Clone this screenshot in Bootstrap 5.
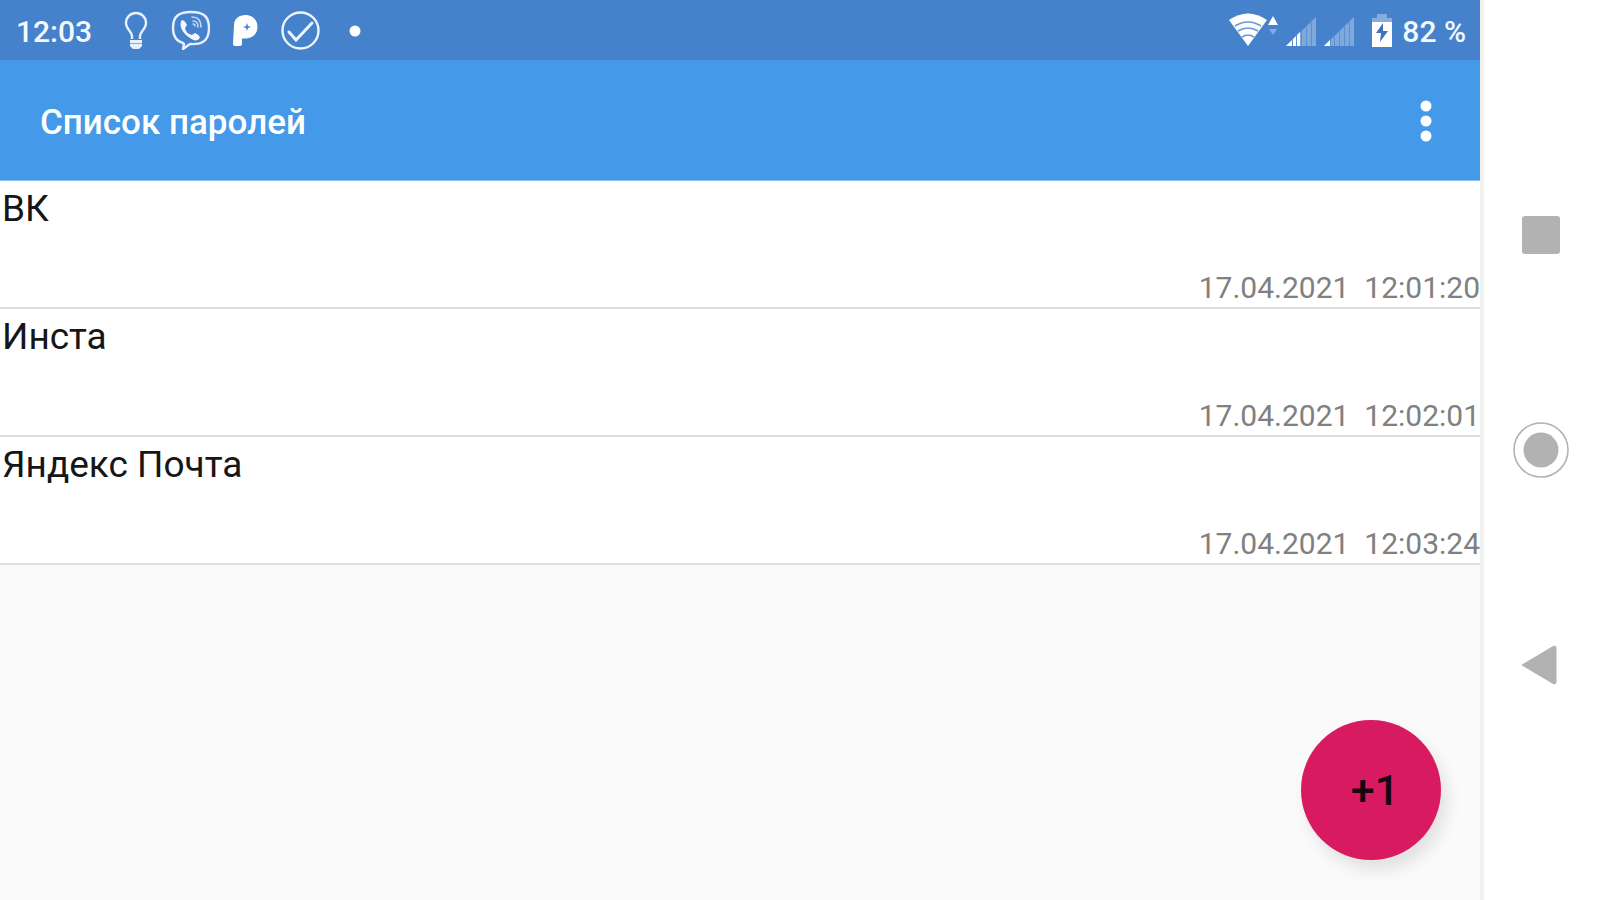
<!DOCTYPE html>
<html lang="ru">
<head>
<meta charset="utf-8">
<meta name="viewport" content="width=device-width, initial-scale=1">
<title>Список паролей</title>
<link href="https://cdn.jsdelivr.net/npm/bootstrap@5.3.0/dist/css/bootstrap.min.css" rel="stylesheet">
<style>
  body { font-family: Roboto, "Noto Sans", sans-serif; background: #fff; }
  svg { display: block; flex: none; }
  .screen { background: #fafafa; }
  .status { height: 60px; background: #4682cb; font-size: 30px; line-height: 40px; font-weight: 500; color: #f3f8ff; padding: 0 14px 0 16px; }
  .status span { padding-top: 3px; }
  .status-icons { gap: 20px; margin-left: 30px; }
  .app-head { height: 121px; background: #4599e9; padding: 0 38px 0 40px; border-bottom: 1px solid #8bbcec; }
  .app-title { font-size: 35px; line-height: 44px; font-weight: 500; color: #fff; padding-top: 5px; }
  .entry { height: 128px; border-bottom: 2px solid #dedede; background: #fff; }
  .entry-name { font-size: 37px; line-height: 44px; color: #161616; padding: 6px 0 0 2px; }
  .entry-date { font-size: 30px; line-height: 36px; color: #808080; white-space: pre; padding-bottom: 1px; }
  .fab { right: 39px; bottom: 40px; width: 140px; height: 140px; background: #d81b60; color: #180510; font-size: 43px; line-height: 52px; font-weight: 500; padding: 0 0 0 8px; box-shadow: 6px 10px 16px rgba(0,0,0,.1); }
  .side-nav { width: 120px; border-left: 4px solid #f0f0f0; padding-right: 3px; }
  .side-nav button { height: 215px; }
</style>
</head>
<body>
<div class="d-flex min-vh-100">
  <main class="screen position-relative flex-grow-1 d-flex flex-column">
    <div class="status d-flex align-items-center">
      <span>12:03</span>
      <div class="status-icons d-flex align-items-center">
        <svg width="28" height="40" viewBox="0 0 28 40" fill="none" stroke="#e6f0ff" stroke-width="2.4" aria-hidden="true">
          <path d="M10 29V26C10 22 4 19 4 13a10 10 0 0 1 20 0c0 6-6 9-6 13v3"/>
          <path d="M8 30h12v6l-3 3h-6l-3-3z" fill="#e6f0ff" stroke="none"/>
          <path d="M8 33.500h12" stroke="#86acdd" stroke-width="1"/>
        </svg>
        <svg width="40" height="40" viewBox="0 0 40 40" fill="none" stroke="#e6f0ff" stroke-width="2.4" stroke-linecap="round" aria-hidden="true">
          <path d="M14 34l-1 5 7-5c13 1 19-4 19-16S33 2 21 2 3 6 3 18c0 8 3 13 10 15z" stroke-linejoin="round"/>
          <path d="M11 11c2-2 4 0 6 4l-2 3c1 4 3 6 7 7l3-2c4 2 6 4 4 6s-5 2-9-1c-6-4-11-10-9-17z" fill="#f3f8ff" stroke="none"/>
          <path d="M22 7c6 0 9 4 9 10M23 11c3 0 5 2 5 6M23 14c1.500 0 2 1 2 2" stroke="#c3d8f4" stroke-width="1.600"/>
        </svg>
        <svg width="30" height="40" viewBox="0 0 30 40" aria-hidden="true">
          <path fill="#fff" fill-rule="evenodd" d="M4 15C4 9 9 5 15.500 5C22.500 5 27.500 10 27.500 17S22 28.500 16 28.500H12V34Q12 36 10 36H5Q3 36 3 34zM17 13l-1 3-3 1 3 1 1 3 1-3 3-1-3-1z"/>
        </svg>
        <svg width="40" height="40" viewBox="0 0 40 40" fill="none" stroke="#edf5ff" stroke-width="2.400" stroke-linecap="round" aria-hidden="true">
          <circle cx="20.500" cy="20.500" r="18"/><path d="M9 22l7 8 16-17" stroke-width="3"/>
        </svg>
        <svg width="30" height="40" viewBox="0 0 30 40" aria-hidden="true"><circle cx="15" cy="21" r="5.500" fill="#fff"/></svg>
      </div>
      <div class="d-flex align-items-center ms-auto">
        <svg class="me-2" width="50" height="40" viewBox="0 0 50 40" aria-hidden="true">
          <path fill="#fff" d="M1 10Q20-3 39 10L20 36z"/>
          <g fill="none" stroke="#6699d8" stroke-width="1.600"><path d="M7 16Q20 8 33 16M10 21Q20 15 30 21M14 27Q20 23 26 27"/></g>
          <path fill="#fff" d="M45 6l5 9H40z"/><path fill="#86acdd" d="M41 19h8l-4 6z"/>
        </svg>
        <svg class="me-2" width="30" height="40" viewBox="0 0 30 40" aria-hidden="true">
          <path fill="#7fa8dc" d="M0 36L30 7v29z"/><path fill="#fff" d="M0 36L14 22v14z"/>
          <path stroke="#5d90d1" d="M6.500 29v7M10.500 25v11M15.500 20v16M20.500 15v21M25.500 10v26"/>
        </svg>
        <svg width="30" height="40" viewBox="0 0 30 40" aria-hidden="true">
          <path fill="#7fa8dc" d="M0 36L30 7v29z"/><path fill="#fff" d="M0 36L7 29v7z"/>
          <path stroke="#5d90d1" d="M6.500 29v7M10.500 25v11M15.500 20v16M20.500 15v21M25.500 10v26"/>
        </svg>
        <svg class="ms-3 me-2" width="24" height="40" viewBox="0 0 24 40" aria-hidden="true">
          <path fill="#86acdd" d="M2 12V8h5V4h10v4h5v4z"/><path fill="#fff" d="M2 12h20v25H2z"/>
          <path fill="#3f75bd" d="M13 13l-7 10h5l-1 9 8-11h-5z"/>
        </svg>
        <span>82 %</span>
      </div>
    </div>
    <header class="app-head d-flex align-items-center justify-content-between">
      <h1 class="app-title m-0">Список паролей</h1>
      <button class="btn p-0 border-0" type="button" aria-label="Меню">
        <svg width="32" height="48" viewBox="0 0 32 48" fill="#fff"><circle cx="16" cy="10" r="5.500"/><circle cx="16" cy="25" r="5.500"/><circle cx="16" cy="40" r="5.500"/></svg>
      </button>
    </header>
    <ul class="list-unstyled m-0">
      <li class="entry d-flex flex-column justify-content-between"><span class="entry-name">ВК</span><time class="entry-date text-end">17.04.2021  12:01:20</time></li>
      <li class="entry d-flex flex-column justify-content-between"><span class="entry-name">Инста</span><time class="entry-date text-end">17.04.2021  12:02:01</time></li>
      <li class="entry d-flex flex-column justify-content-between"><span class="entry-name">Яндекс Почта</span><time class="entry-date text-end">17.04.2021  12:03:24</time></li>
    </ul>
    <button class="fab position-absolute rounded-circle border-0" type="button">+1</button>
  </main>
  <nav class="side-nav d-flex flex-column justify-content-center flex-shrink-0" aria-label="Навигация">
    <button class="btn border-0 p-0 d-flex align-items-center justify-content-center" type="button" aria-label="Недавние"><svg width="56" height="56" viewBox="0 0 56 56"><rect x="9" y="9" width="38" height="38" rx="3" fill="#b2b2b2"/></svg></button>
    <button class="btn border-0 p-0 d-flex align-items-center justify-content-center" type="button" aria-label="Домой"><svg width="56" height="56" viewBox="0 0 56 56"><circle cx="28" cy="28" r="27" fill="none" stroke="#b2b2b2" stroke-width="1.600"/><circle cx="28" cy="28" r="17.500" fill="#b2b2b2"/></svg></button>
    <button class="btn border-0 p-0 d-flex align-items-center justify-content-center" type="button" aria-label="Назад"><svg width="56" height="56" viewBox="0 0 56 56"><path d="M9 28L41 9l2 1v36l-2 1z" fill="#b2b2b2" stroke="#b2b2b2" stroke-linejoin="round"/></svg></button>
  </nav>
</div>
<script src="https://cdn.jsdelivr.net/npm/bootstrap@5.3.0/dist/js/bootstrap.bundle.min.js"></script>
</body>
</html>
